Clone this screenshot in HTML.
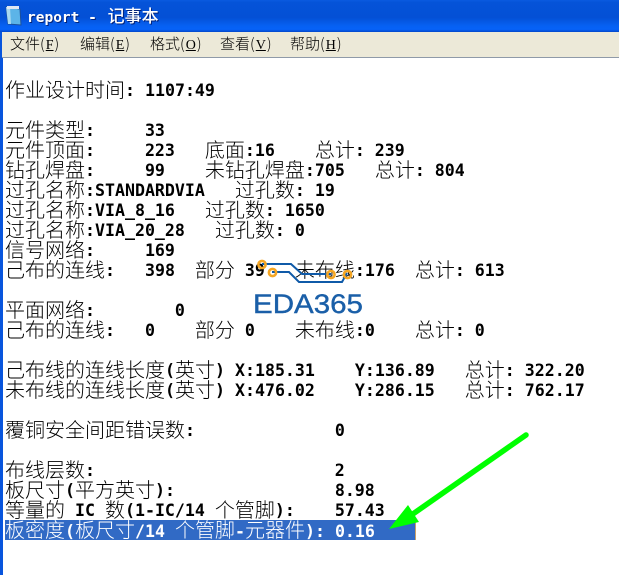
<!DOCTYPE html>
<html><head><meta charset="utf-8"><style>
html,body{margin:0;padding:0;background:#fff}
#w{position:relative;width:619px;height:575px;overflow:hidden;background:#fff}
#tb{position:absolute;left:0;top:0;width:619px;height:32px;background:linear-gradient(#0a5ae0 0,#0553d8 8%,#0450d6 55%,#0660f2 80%,#0662f8 92%,#0446c8 100%)}
#title{position:absolute;left:27px;top:3px;font:bold 14.5px/24px "DejaVu Sans Mono","Noto Sans CJK SC",monospace;color:#fff;white-space:pre;text-shadow:1px 1px 0 #02237a}
#title i{font:500 17px/24px "Noto Sans CJK SC",sans-serif;margin-left:2px}
#menu{position:absolute;left:2px;top:32px;width:617px;height:25px;background:#ece9d8}
#menu span{position:absolute;top:2px;font:300 15px/20px "Noto Sans CJK SC",sans-serif;color:#000;white-space:pre}
#menu u{font:14px/20px "Liberation Serif",serif;margin:0 1px}
#sep{position:absolute;left:2px;top:57px;width:617px;height:1px;background:#8f9aa8}
#lb{position:absolute;left:0;top:32px;width:3px;height:543px;background:#0855dd}
.l{position:absolute;left:5px;height:20px;width:610px;font:bold 16.6px/20px "DejaVu Sans Mono",monospace;white-space:pre;color:#000;margin-top:-2px}
.l i{font:300 20px/20px "Noto Sans CJK SC",sans-serif;position:relative;top:1px}
.l.s{background:#316ac5;color:#fff;width:410px;margin-top:0;line-height:17px}
.l.s i{top:0;line-height:17px}
</style></head><body><div id="w">
<div id="tb"></div>
<svg style="position:absolute;left:4px;top:5px" width="18" height="22" viewBox="0 0 18 22"><path d="M2 2L16 4L17 20L4 19Z" fill="#5cb4e8" stroke="#1c4f9a"/><path d="M2 2L6 2L7 19L4 19Z" fill="#a8d8f0"/><path d="M3 1H15V4H3Z" fill="#dfe8f2"/></svg>
<div id="title">report - <i>记事本</i></div>
<div id="lb"></div>
<div id="menu">
<span style="left:8px">文件(<u>F</u>)</span>
<span style="left:78px">编辑(<u>E</u>)</span>
<span style="left:148px">格式(<u>O</u>)</span>
<span style="left:218px">查看(<u>V</u>)</span>
<span style="left:288px">帮助(<u>H</u>)</span>
</div>
<div id="sep"></div>

<div class="l" style="top:80px"><i>作业设计时间</i>: 1107:49</div>
<div class="l" style="top:120px"><i>元件类型</i>:     33</div>
<div class="l" style="top:140px"><i>元件顶面</i>:     223   <i>底面</i>:16    <i>总计</i>: 239</div>
<div class="l" style="top:160px"><i>钻孔焊盘</i>:     99    <i>未钻孔焊盘</i>:705   <i>总计</i>: 804</div>
<div class="l" style="top:180px"><i>过孔名称</i>:STANDARDVIA   <i>过孔数</i>: 19</div>
<div class="l" style="top:200px"><i>过孔名称</i>:VIA_8_16   <i>过孔数</i>: 1650</div>
<div class="l" style="top:220px"><i>过孔名称</i>:VIA_20_28   <i>过孔数</i>: 0</div>
<div class="l" style="top:240px"><i>信号网络</i>:     169</div>
<div class="l" style="top:260px"><i>己布的连线</i>:   398  <i>部分</i> 39   <i>未布线</i>:176  <i>总计</i>: 613</div>
<div class="l" style="top:300px"><i>平面网络</i>:        0</div>
<div class="l" style="top:320px"><i>己布的连线</i>:   0    <i>部分</i> 0    <i>未布线</i>:0    <i>总计</i>: 0</div>
<div class="l" style="top:360px"><i>己布线的连线长度</i>(<i>英寸</i>) X:185.31    Y:136.89   <i>总计</i>: 322.20</div>
<div class="l" style="top:380px"><i>未布线的连线长度</i>(<i>英寸</i>) X:476.02    Y:286.15   <i>总计</i>: 762.17</div>
<div class="l" style="top:420px"><i>覆铜安全间距错误数</i>:              0</div>
<div class="l" style="top:460px"><i>布线层数</i>:                        2</div>
<div class="l" style="top:480px"><i>板尺寸</i>(<i>平方英寸</i>):                8.98</div>
<div class="l" style="top:500px"><i>等量的</i> IC <i>数</i>(1-IC/14 <i>个管脚</i>):    57.43</div>
<div class="l s" style="top:520px"><i>板密度</i>(<i>板尺寸</i>/14 <i>个管脚</i>-<i>元器件</i>): 0.16</div>

<svg style="position:absolute;left:0;top:0" width="619" height="575" viewBox="0 0 619 575">
<rect x="415" y="520" width="1" height="20" fill="#c9a06a"/>
<path d="M526 435L410 516" stroke="#00ff00" stroke-width="5.500" stroke-linecap="round" fill="none"/>
<path d="M389 529L408 505L419 522Z" fill="#00ff00"/>
<g fill="none" stroke="#0f5aa8" stroke-width="2">
<path d="M262 264H291L302 274H331"/>
<path d="M272 272H289L299 282H342L347 273"/>
</g>
<g fill="none" stroke="#f5a623" stroke-width="2.600">
<circle cx="262" cy="264.500" r="3.600"/>
<circle cx="272.500" cy="272.500" r="3.600"/>
<circle cx="331" cy="274.500" r="3.600"/>
<circle cx="347.500" cy="274.500" r="3.600"/>
</g>
<text x="253" y="313" font-family="Liberation Sans,sans-serif" font-size="27" fill="#1a5fa8" stroke="#1a5fa8" stroke-width="0.400" textLength="110" lengthAdjust="spacingAndGlyphs">EDA365</text>
</svg>
</div></body></html>
